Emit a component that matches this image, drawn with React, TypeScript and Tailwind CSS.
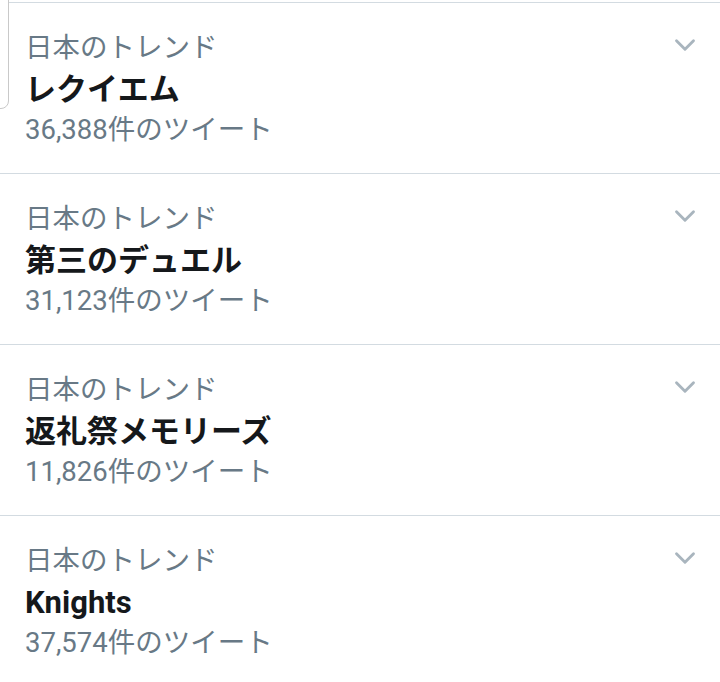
import { ChevronDown } from 'lucide-react'

interface TrendItemProps {
  name: string
  count: string
}

const trends: TrendItemProps[] = [
  { name: 'レクイエム', count: '36,388' },
  { name: '第三のデュエル', count: '31,123' },
  { name: '返礼祭メモリーズ', count: '11,826' },
  { name: 'Knights', count: '37,574' },
]

function TrendItem(props: TrendItemProps) {
  return (
    <div className="flex items-start justify-between border-t border-[#d3dbe1] pb-[23px] pl-[25px] pr-[18px] pt-[23px]">
      <div className="flex flex-col">
        <span className="mt-[2px] text-[27.5px] leading-[40px] text-[#687986]">日本のトレンド</span>
        <span className="mt-[2px] text-[31px] font-bold leading-[40px] text-[#15181b]">{props.name}</span>
        <span className="text-[27.5px] leading-[40px] text-[#687986]">{props.count}件のツイート</span>
      </div>
      <ChevronDown className="mt-[2px] text-[#a9b5be]" size={34} strokeWidth={2} />
    </div>
  )
}

export default function App() {
  return (
    <div
      className="relative h-[682px] w-[720px] overflow-hidden bg-white pt-[2px]"
      style={{ fontFamily: "Roboto, 'Noto Sans CJK JP', sans-serif" }}
    >
      <div className="absolute left-[-20px] top-[-20px] h-[129px] w-[29px] rounded-br-[8px] border border-[#c9c9c9] bg-white" />
      {trends.map((t) => (
        <TrendItem key={t.name} name={t.name} count={t.count} />
      ))}
    </div>
  )
}
